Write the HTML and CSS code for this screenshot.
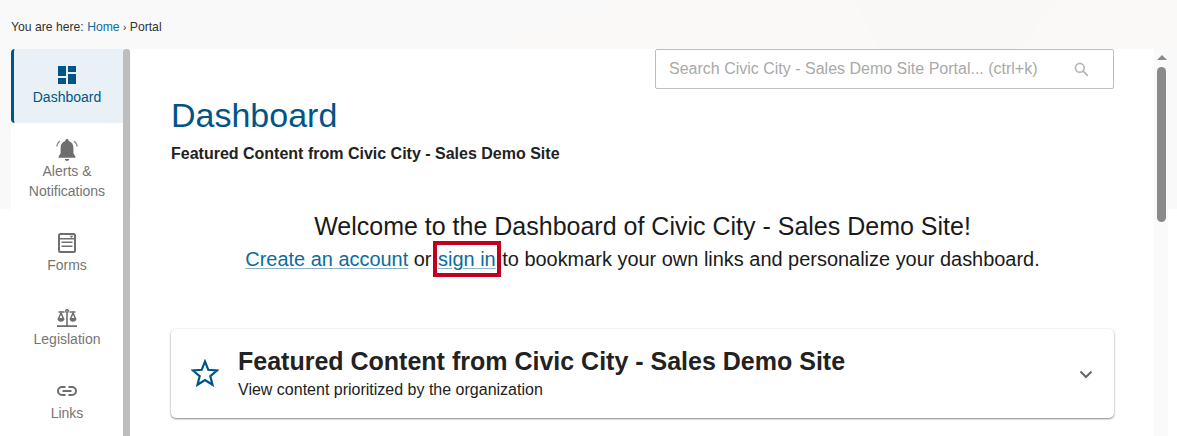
FILE: index.html
```html
<!DOCTYPE html>
<html lang="en">
<head>
<meta charset="utf-8">
<title>Dashboard</title>
<link rel="stylesheet" href="styles.css">
</head>
<body>
<div class="page">
  <header class="crumbs">
    <svg class="crumbs-art" viewBox="0 0 1177 49" preserveAspectRatio="none"><path class="art-warm" d="M480 49L640 0H1177V49z"/><path class="art-cool" d="M855 0H1063L1016 49H880z"/></svg>
    <span>You are here:</span> <a href="#">Home</a> <span class="sep">›</span> <span>Portal</span>
  </header>
  <div class="shell">
    <nav class="side">
      <a class="item active" href="#">
        <svg class="ico" viewBox="0 0 18 18"><path d="M0 0h8v10H0zM10 0h8v6h-8zM10 8h8v10h-8zM0 12h8v6H0z"/></svg>
        <span>Dashboard</span>
      </a>
      <a class="item alerts" href="#">
        <svg class="ico" viewBox="0 0 22 22"><path d="M11 0c-1 0-1.700.7-1.700 1.600v.5C6.200 3 4.600 5.600 4.600 8.800v5.400L2.600 17.400v1.400h16.800v-1.400l-2-3.200V8.800c0-3.200-1.600-5.800-4.700-6.700v-.5C12.700.7 12 0 11 0zM8.800 20a2.200 2 0 0 0 4.400 0z"/><path class="ring" d="M4 2C2.100 3.400 1 5.300.8 7.400M18 2c1.900 1.400 3 3.300 3.200 5.400"/></svg>
        <span>Alerts &amp; Notifications</span>
      </a>
      <a class="item forms" href="#">
        <svg class="ico" viewBox="0 0 18 20"><rect class="line" x="1" y="1" width="16" height="18" rx="1.500"/><path d="M1 5h16v1.500H1zM3.500 8.500h11V10h-11zM3.500 12.500h11V14h-11zM11.500 2.800h4L13.500 5z"/></svg>
        <span>Forms</span>
      </a>
      <a class="item scales" href="#">
        <svg class="ico" viewBox="0 0 20 18"><path d="M9.200 3.500h1.600v13H9.200zM0 16.200h20V18H0zM1.500 2.300h6v1.500h-6zM12.500 2.300h6v1.500h-6z"/><circle class="thin" cx="10" cy="2" r="1.300"/><path class="thin" d="M4 4L1.500 9.800h5zM16 4l-2.500 5.800h5z"/><path d="M.8 9.500h6.400a3.200 3.300 0 0 1-6.400 0zM12.800 9.500h6.400a3.200 3.300 0 0 1-6.400 0z"/></svg>
        <span>Legislation</span>
      </a>
      <a class="item links" href="#">
        <svg class="ico" viewBox="0 0 20 10"><path class="line" d="M8.500 1H5a4 4 0 0 0 0 8h3.500M11.500 1H15a4 4 0 0 1 0 8h-3.500M5.500 5h9"/></svg>
        <span>Links</span>
      </a>
    </nav>
    <div class="side-bar"></div>
    <main class="main">
      <div class="search-row">
        <div class="search">
          <span class="search-text">Search Civic City - Sales Demo Site Portal... (ctrl+k)</span>
          <svg class="search-ico" viewBox="0 0 16 16"><circle cx="6.200" cy="6.200" r="4.700"/><path d="M9.800 9.800l5 5"/></svg>
        </div>
      </div>
      <h1>Dashboard</h1>
      <p class="sub">Featured Content from Civic City - Sales Demo Site</p>
      <section class="welcome">
        <h2>Welcome to the Dashboard of Civic City - Sales Demo Site!</h2>
        <p><a href="#">Create an account</a> or <a class="mark" href="#">sign in</a> to bookmark your own links and personalize your dashboard.</p>
      </section>
      <section class="card">
        <svg class="star" viewBox="0 0 28 28"><path d="M14 2.500l3.300 8.300 8.900.6-6.900 5.700 2.200 8.700L14 21l-7.500 4.800 2.200-8.700-6.900-5.700 8.900-.6z"/></svg>
        <div class="card-text">
          <h3>Featured Content from Civic City - Sales Demo Site</h3>
          <p>View content prioritized by the organization</p>
        </div>
        <svg class="chev" viewBox="0 0 14 9"><path d="M1.500 1.500L7 7l5.500-5.500"/></svg>
      </section>
    </main>
    <aside class="scroll">
      <div class="arrow"></div>
      <div class="thumb"></div>
    </aside>
  </div>
</div>
</body>
</html>
```

FILE: styles.css
```css
* { box-sizing: border-box; }
html, body { margin: 0; height: 436px; overflow: hidden; }
body { font-family: "Liberation Sans", Arial, sans-serif; background: #fff; color: #222; }
a { color: #005587; }
.page {
  height: 436px;
  overflow: hidden;
  background: linear-gradient(to bottom, #f9f9f9 0, #f9f9f9 209px, #fff 209px);
  display: flex;
  flex-direction: column;
}
.crumbs {
  position: relative;
  height: 49px;
  flex: none;
  padding: 20px 0 0 11px;
  font-size: 12.200px;
  line-height: 14px;
  color: #333;
  background: #f9f9f9;
}
.crumbs > span, .crumbs > a { position: relative; }
.crumbs-art { position: absolute; left: 0; top: 0; width: 100%; height: 49px; }
.art-warm { fill: #fbf9f8; }
.art-cool { fill: #f9f8f7; }
.crumbs a { text-decoration: none; color: #0b6d9c; }
.sep { font-size: 10px; }
.shell { display: flex; flex: 1; padding-left: 11px; min-height: 0; }
.side { width: 112px; flex: none; background: #fff; }
.item {
  display: flex;
  flex-direction: column;
  align-items: center;
  height: 74px;
  padding-top: 16px;
  font-size: 14px;
  line-height: 20px;
  color: #757575;
  text-decoration: none;
  text-align: center;
}
.item .ico { fill: #6e6e6e; flex: none; }
.item.active {
  color: #005587;
  background: #e9f1f6;
  border-left: 3px solid #005587;
  border-radius: 4px 0 0 4px;
  padding: 17px 3px 0 0;
}
.item.active .ico { fill: #005587; width: 18px; height: 18px; margin-bottom: 3px; }
.alerts { height: 94px; padding-top: 16px; }
.alerts .ico { width: 22px; height: 22px; }
.forms { padding-top: 16px; }
.forms .ico { width: 18px; height: 20px; margin-bottom: 2px; }
.scales { padding-top: 16px; }
.scales .ico { width: 20px; height: 18px; margin: 2px 0; }
.links { padding-top: 15px; }
.links .ico { width: 20px; height: 10px; margin: 6px 0 7px; }
.ico .line { fill: none; stroke: #6e6e6e; stroke-width: 2; }
.ico .thin { fill: none; stroke: #6e6e6e; stroke-width: 1.500; }
.ico .ring { fill: none; stroke: #8a8a8a; stroke-width: 1.500; }
.side-bar { width: 7px; flex: none; background: #bdbdbd; border-radius: 3px 3px 0 0; }
.main { width: 1023px; flex: none; margin-left: 1px; background: #fff; padding: 0 40px; }
.search-row { display: flex; justify-content: flex-end; }
.search {
  width: 459px;
  height: 40px;
  border: 1px solid #bdbdbd;
  border-radius: 2px;
  display: flex;
  align-items: center;
  justify-content: space-between;
  padding: 0 24px 0 13px;
  font-size: 16px;
  color: #a9a9a9;
}
.search-ico { width: 15px; height: 15px; fill: none; stroke: #b5b5b5; stroke-width: 1.700; }
h1 { margin: 7px 0 0; font-size: 34px; line-height: 38px; font-weight: 400; color: #005587; }
.sub { margin: 11px 0 0; font-size: 16px; line-height: 18px; font-weight: 700; color: #222; }
.welcome { text-align: center; margin-top: 48px; }
.welcome h2 { margin: 0; font-size: 25px; line-height: 30px; font-weight: 400; color: #1a1a1a; }
.welcome p { margin: 5px 0 0; font-size: 19.950px; line-height: 26px; color: #1a1a1a; }
.welcome a { color: #0b6d9c; text-decoration-color: #8fb3c9; text-underline-offset: 2px; }
.mark { outline: 4px solid #c0001f; outline-offset: 0; padding: 3px 1px; }
.card {
  margin-top: 57px;
  height: 89px;
  display: flex;
  align-items: center;
  border-radius: 5px;
  background: #fff;
  box-shadow: 0 1px 2px rgba(0,0,0,.45), 0 0 3px rgba(0,0,0,.08);
  padding: 0 21px 0 20px;
}
.star { width: 28px; height: 28px; fill: none; stroke: #005587; stroke-width: 2.200; flex: none; margin-top: -1px; }
.card-text { flex: 1; margin: -2px 0 0 19px; }
.card-text h3 { margin: 0; font-size: 25px; line-height: 28px; font-weight: 700; color: #222; }
.card-text p { margin: 6px 0 0; font-size: 16px; line-height: 18px; color: #222; }
.chev { width: 14px; height: 9px; fill: none; stroke: #666; stroke-width: 2; flex: none; margin-top: 2px; }
.scroll { width: 14px; flex: none; background: #fafafa; padding-left: 3px; }
.arrow { width: 0; height: 0; margin-top: 6px; border-left: 5px solid transparent; border-right: 5px solid transparent; border-bottom: 5px solid #8a8a8a; }
.thumb { width: 9px; height: 155px; margin-top: 7px; background: #8a8a8a; border-radius: 5px; }
```
